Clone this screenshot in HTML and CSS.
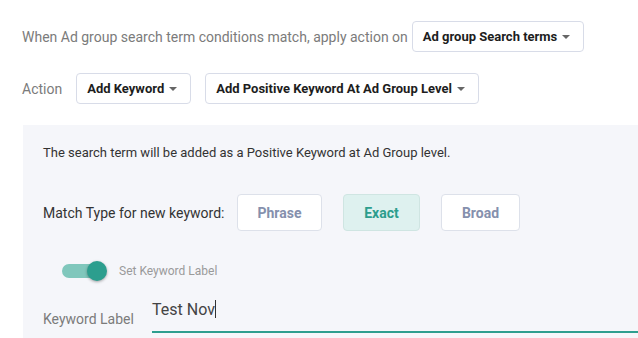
FILE: index.html
```html
<!DOCTYPE html>
<html lang="en">
<head>
  <meta charset="UTF-8"/>
  <title>Search term action</title>
  <link rel="stylesheet" href="styles.css">
</head>
<body>
  <div class="action-form">
    <div class="row">
      <span class="muted lead">When Ad group search term conditions match, apply action on</span>
      <button class="dropdown">Ad group Search terms <span class="caret"></span></button>
    </div>

    <div class="row">
      <span class="muted">Action</span>
      <button class="dropdown">Add Keyword <span class="caret"></span></button>
      <button class="dropdown">Add Positive Keyword At Ad Group Level <span class="caret"></span></button>
    </div>

    <div class="panel">
      <p class="note">The search term will be added as a Positive Keyword at Ad Group level.</p>

      <div class="match-row">
        <span class="match-label">Match Type for new keyword:</span>
        <div class="match-types">
          <button class="match">Phrase</button>
          <button class="match active">Exact</button>
          <button class="match">Broad</button>
        </div>
      </div>

      <label class="toggle-row">
        <span class="toggle"><span class="knob"></span></span>
        <span class="toggle-label">Set Keyword Label</span>
      </label>

      <div class="field">
        <span class="field-label">Keyword Label</span>
        <div class="input">Test Nov<span class="cursor"></span></div>
      </div>
    </div>
  </div>
</body>
</html>
```

FILE: styles.css
```css
html, body { margin:0; padding:0; height:100%; background:#fff; overflow:hidden; }
body { font-family:Roboto, "Liberation Sans", sans-serif; color:#333; }

.action-form { padding-top:21px; }

.row {
  display:flex; align-items:center; gap:14px;
  padding-left:22px; margin-bottom:21px;
}
.muted { color:#7b7b7b; font-size:14px; }
.lead { margin-right:-10px; }

.dropdown {
  display:flex; align-items:center; gap:5px;
  height:31px; padding:0 13px 0 10px;
  background:#fff; border:1px solid #d8dce8; border-radius:4px;
  font-family:inherit; font-size:13px; font-weight:700; color:#1d1d1d;
}
.caret {
  width:0; height:0;
  border-left:4px solid transparent; border-right:4px solid transparent;
  border-top:4px solid #666;
}

/* grey panel */
.panel {
  margin-left:23px; background:#f5f6fa;
  padding:18px 0 0 20px; height:213px; box-sizing:border-box;
}
.note { margin:0; font-size:13px; color:#333; line-height:20px; }

.match-row { display:flex; align-items:center; margin-top:31px; }
.match-label { width:194px; font-size:14px; color:#333; }
.match-types { display:flex; gap:21px; }
.match {
  height:37px; padding:0;
  background:#fff; border:1px solid #dde1ea; border-radius:4px;
  font-family:inherit; font-size:14px; font-weight:700; color:#8590ad;
}
.match:first-child { width:85px; }
.match:nth-child(2) { width:77px; }
.match:nth-child(3) { width:79px; }
.match.active { background:#def1ef; border-color:#cfe5e2; color:#2c9e8d; }

.toggle-row { display:flex; align-items:center; gap:13px; margin:33px 0 0 19px; }
.toggle {
  position:relative; width:44px; height:14px;
  background:#80c7bc; border-radius:7px;
}
.knob {
  position:absolute; right:-1px; top:-3px;
  width:20px; height:20px; border-radius:50%;
  background:#2c9e8e; box-shadow:0 1px 3px rgba(0,0,0,0.35);
}
.toggle-label { font-size:12px; color:#9a9a9a; }

.field { display:flex; align-items:flex-end; margin-top:22px; }
.field-label { width:109px; font-size:14px; color:#7b7b7b; padding-bottom:6px; }
.input {
  flex:1; font-size:16px; color:#444;
  padding-bottom:12px; border-bottom:2px solid #2e9e8f;
}
.cursor {
  display:inline-block; width:1px; height:18px; background:#333;
  vertical-align:-3px;
}
```
